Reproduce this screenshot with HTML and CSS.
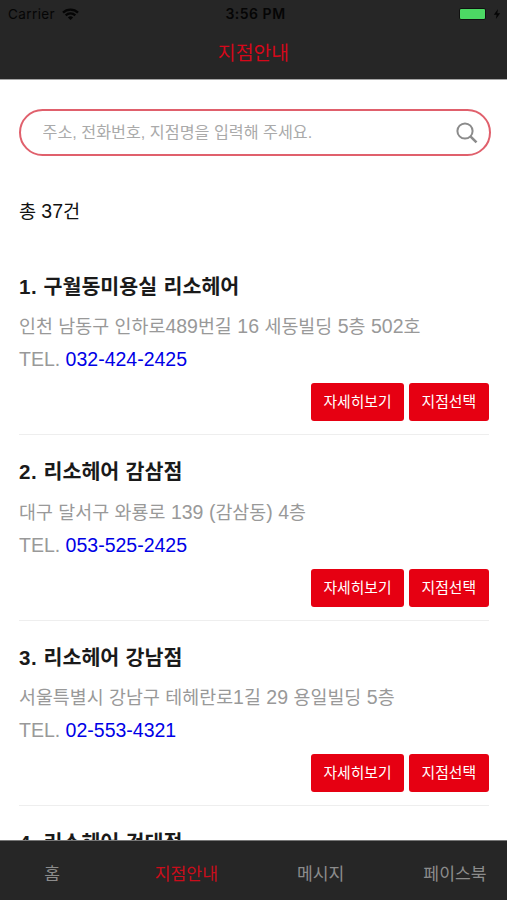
FILE: index.html
```
<!DOCTYPE html>
<html lang="ko">
<head>
  <meta charset="UTF-8">
  <meta name="viewport" content="width=device-width, initial-scale=1.0">
  <title>지점안내</title>
  <link rel="stylesheet" href="styles.css">
</head>
<body>

  <header class="header">
    <div class="status">
      <div class="carrier">
        <span>Carrier</span>
        <svg class="wifi" width="17" height="12" viewBox="0 0 17 12" fill="none" stroke="#050505" stroke-width="2.3">
          <path d="M1 4.6C5 .5 12 .5 16 4.6M3.7 7.3C6.4 4.7 10.6 4.7 13.3 7.3"/>
          <path d="M8.5 12L5.9 9.4C7.4 8 9.6 8 11.1 9.4Z" fill="#050505" stroke="none"/>
        </svg>
      </div>
      <div class="time">3:56 PM</div>
      <div class="power">
        <span class="battery"></span>
        <svg width="8" height="12" viewBox="0 0 8 12"><path d="M5 1L.8 6.7H3.6L2.9 11L7.2 5.2H4.3Z" fill="#050505"/></svg>
      </div>
    </div>
    <h1 class="title">지점안내</h1>
  </header>

  <main class="content">
    <form class="search">
      <input type="text" class="search-input" placeholder="주소, 전화번호, 지점명을 입력해 주세요.">
      <svg class="search-icon" width="22" height="22" viewBox="0 0 22 22" fill="none" stroke="#8b8b8b">
        <circle cx="9" cy="9" r="7.6" stroke-width="2"/>
        <path d="M14.4 14.4L20.5 20.4" stroke-width="2.6"/>
      </svg>
    </form>

    <p class="total">총 <span class="num">37</span>건</p>

    <ul class="list">
      <li class="shop">
        <h2 class="name"><span class="no">1.</span> 구월동미용실 리소헤어</h2>
        <p class="addr">인천 남동구 인하로<span class="num">489</span>번길 <span class="num">16</span> 세동빌딩 <span class="num">5</span>층 <span class="num">502</span>호</p>
        <p class="tel">TEL. <a href="tel:032-424-2425">032-424-2425</a></p>
        <div class="buttons">
          <button type="button" class="btn">자세히보기</button>
          <button type="button" class="btn">지점선택</button>
        </div>
      </li>
      <li class="shop">
        <h2 class="name"><span class="no">2.</span> 리소헤어 감삼점</h2>
        <p class="addr">대구 달서구 와룡로 <span class="num">139</span> <span class="num">(</span>감삼동<span class="num">)</span> <span class="num">4</span>층</p>
        <p class="tel">TEL. <a href="tel:053-525-2425">053-525-2425</a></p>
        <div class="buttons">
          <button type="button" class="btn">자세히보기</button>
          <button type="button" class="btn">지점선택</button>
        </div>
      </li>
      <li class="shop">
        <h2 class="name"><span class="no">3.</span> 리소헤어 강남점</h2>
        <p class="addr">서울특별시 강남구 테헤란로<span class="num">1</span>길 <span class="num">29</span> 용일빌딩 <span class="num">5</span>층</p>
        <p class="tel">TEL. <a href="tel:02-553-4321">02-553-4321</a></p>
        <div class="buttons">
          <button type="button" class="btn">자세히보기</button>
          <button type="button" class="btn">지점선택</button>
        </div>
      </li>
      <li class="shop">
        <h2 class="name"><span class="no">4.</span> 리소헤어 건대점</h2>
      </li>
    </ul>
  </main>

  <nav class="tabs">
    <a class="tab">홈</a>
    <a class="tab active">지점안내</a>
    <a class="tab">메시지</a>
    <a class="tab">페이스북</a>
  </nav>

</body>
</html>
```
FILE: styles.css
```
* {
  box-sizing: border-box;
  margin: 0;
  padding: 0;
}

body {
  display: flex;
  flex-direction: column;
  height: 900px;
  overflow: hidden;
  background-color: #fff;
  color: #1a1a1a;
  font-family: "Liberation Sans", "Noto Sans CJK KR", sans-serif;
}

/* header */
.header {
  flex: none;
  height: 80px;
  background-color: #262626;
  border-bottom: 1px solid #a5a5a5;
}

.status {
  display: grid;
  grid-template-columns: 1fr auto 1fr;
  align-items: center;
  height: 27px;
  padding: 0 6px 0 8px;
  color: #050505;
  font-family: Inter, sans-serif;
  font-size: 13.5px;
}

.carrier {
  display: flex;
  align-items: center;
  gap: 7px;
  letter-spacing: 0.4px;
}

.time {
  padding-left: 2px;
  font-weight: 600;
  font-size: 14px;
  letter-spacing: 0.5px;
}

.power {
  display: flex;
  align-items: center;
  justify-content: flex-end;
  gap: 7px;
}

.battery {
  width: 27px;
  height: 12px;
  background-color: #4cd964;
  border: 1px solid #111;
  border-radius: 2px;
}

.title {
  color: #d5081a;
  font-size: 19.4px;
  font-weight: 400;
  line-height: 52px;
  text-align: center;
}

/* content */
.content {
  flex: 1;
  min-height: 0;
  overflow: hidden;
  padding: 29px 18px 0 19px;
}

.search {
  display: flex;
  align-items: center;
  width: 472px;
  height: 47px;
  padding: 0 11px 0 21.5px;
  border: 2px solid #e0606c;
  border-radius: 24px;
}

.search-input {
  flex: 1;
  border: none;
  outline: none;
  background: none;
  font-family: inherit;
  font-size: 16.2px;
}

.search-input::placeholder {
  color: #aaa;
}

.total {
  margin-top: 35px;
  color: #111;
  font-size: 18.6px;
  line-height: 40px;
}

.num {
  font-size: 19.5px;
}

.list {
  margin-top: 17.5px;
  list-style: none;
}

.shop {
  width: 470px;
  height: 185.67px;
  padding-top: 17px;
  border-bottom: 1px solid #eee;
}

.name {
  margin-bottom: 3.5px;
  font-size: 20.6px;
  font-weight: 700;
  line-height: 40px;
  word-spacing: 0.6px;
}

.name .no {
  letter-spacing: 0.5px;
}

.addr,
.tel {
  color: #999;
  line-height: 33px;
}

.addr {
  font-size: 18.4px;
  word-spacing: 0.4px;
}

.tel {
  font-size: 19.5px;
}

.tel a {
  color: #0000e6;
  text-decoration: none;
}

.buttons {
  display: flex;
  justify-content: flex-end;
  gap: 5px;
  margin-top: 7px;
  padding-right: 0.5px;
}

.btn {
  height: 38px;
  padding: 0 12.5px 3px;
  border: none;
  border-radius: 3px;
  background-color: #e60012;
  color: #fff;
  font-family: inherit;
  font-size: 14.8px;
}

/* bottom tabs, the row is wider than the screen */
.tabs {
  flex: none;
  display: grid;
  grid-template-columns: repeat(4, 134.3px);
  justify-content: center;
  height: 60px;
  background-color: #262626;
  border-top: 1px solid #777;
}

.tab {
  color: #8c8c8c;
  font-size: 17.2px;
  line-height: 67px;
  text-align: center;
}

.tab.active {
  color: #c90d1b;
}
```
